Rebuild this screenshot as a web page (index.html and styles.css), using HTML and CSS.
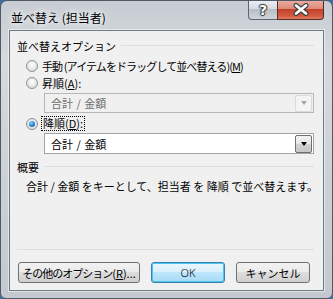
FILE: index.html
```html
<!DOCTYPE html>
<html>
<head>
    <title>並べ替え (担当者)</title>
    <meta charset="utf-8">
    <link rel="stylesheet" href="styles.css">
</head>
<body>
    <div class="window">
        <div class="titlebar">
            <span class="title">並べ替え (担当者)</span>
            <div class="caption">
                <div class="cap-btn help">?</div>
                <div class="cap-btn close">
                    <svg width="18" height="13" viewBox="0 0 18 13">
                        <path d="M4 2.5 L14 10.5 M14 2.5 L4 10.5" stroke="#3a3f45" stroke-width="5" stroke-linecap="round"/>
                        <path d="M4 2.5 L14 10.5 M14 2.5 L4 10.5" stroke="#fff" stroke-width="2.8" stroke-linecap="round"/>
                    </svg>
                </div>
            </div>
        </div>
        <div class="client">
            <div class="group-head">
                <span>並べ替えオプション</span>
                <div class="rule"></div>
            </div>
            <div class="radio-row first">
                <span class="radio"></span>
                <span class="tight">手動 (アイテムをドラッグして並べ替える)(<u>M</u>)</span>
            </div>
            <div class="radio-row">
                <span class="radio"></span>
                <span>昇順(<u>A</u>):</span>
            </div>
            <div class="combo disabled">
                <span class="combo-text">合計 / 金額</span>
                <span class="drop"><i></i></span>
            </div>
            <div class="radio-row">
                <span class="radio checked"></span>
                <span class="focus">降順(<u>D</u>):</span>
            </div>
            <div class="combo active">
                <span class="combo-text">合計 / 金額</span>
                <span class="drop"><i></i></span>
            </div>
            <div class="group-head summary">
                <span>概要</span>
                <div class="rule"></div>
            </div>
            <div class="desc">合計 / 金額 をキーとして、担当者 を 降順 で並べ替えます。</div>
            <div class="separator"></div>
            <div class="buttons">
                <div class="btn wide"><span class="kana">その他のオプション</span><span>(<u>R</u>)...</span></div>
                <div class="btn default"><span class="latin">OK</span></div>
                <div class="btn"><span>キャンセル</span></div>
            </div>
        </div>
    </div>
</body>
</html>
```
FILE: styles.css
```css
* { margin: 0; padding: 0; box-sizing: border-box; }
body { background: #3d6ea3; font-family: "Noto Sans CJK JP", "Noto Sans", sans-serif; font-size: 11px; color: #000; }

.window { width: 333px; height: 299px; border: 1px solid #4f5a66; border-radius: 7px 7px 6px 6px; background: linear-gradient(#c6ccd2, #d6dadd 20%, #ccd1d5 60%, #c3c9ce); overflow: hidden; }
.titlebar { height: 29px; display: flex; justify-content: space-between; padding: 0 8px 0 10px; }
.title { font-size: 12px; line-height: 29px; padding-top: 2px; text-shadow: 0 0 6px #fff, 0 0 10px #fff; }
.caption { display: flex; height: 20px; margin-top: -1px; }
.cap-btn { height: 20px; border: 1px solid #5c6670; border-top: none; display: flex; align-items: center; justify-content: center; }
.help { width: 29px; border-radius: 0 0 0 4px; border-right: none; background: linear-gradient(#eef1f3, #d6dbe0 45%, #b7bec5 50%, #cfd5da); color: #fff; font: bold 14px "DejaVu Sans", sans-serif; text-shadow: 0 0 1px #333, 1px 0 1px #333, -1px 0 1px #333, 0 1px 1px #333, 0 -1px 1px #333; }
.close { width: 47px; border-radius: 0 0 4px 0; border-color: #5a2a24; background: linear-gradient(#eab0a4, #de8a78 45%, #c5412b 50%, #d0563c 80%, #e07a5e); }

.client { height: 261px; margin: 0 8px; border: 1px solid #6e7986; background: #f0f0f0; box-shadow: 0 0 0 1px rgba(255,255,255,0.5); }

.group-head { display: flex; align-items: center; height: 13px; margin-top: 8px; padding: 0 9px 0 7px; }
.group-head .rule { flex: 1; height: 1px; background: #d5dfe5; margin-left: 5px; }
.group-head.summary { margin-top: 6px; }

.radio-row { display: flex; align-items: center; height: 17px; padding-left: 16px; }
.radio-row.first { margin-top: 5px; }
.radio-row + .combo { margin-top: 2px; }
.combo + .radio-row { margin-top: 2px; }
.tight { letter-spacing: -0.9px; white-space: nowrap; }
.radio { width: 12px; height: 12px; border-radius: 50%; border: 1px solid #8f9295; background: radial-gradient(circle at 50% 40%, #fff, #e6e6e6 55%, #cdcdcd); margin-right: 4px; display: flex; align-items: center; justify-content: center; }
.radio.checked::after { content: ""; width: 6px; height: 6px; border-radius: 50%; background: radial-gradient(circle at 40% 35%, #8fd4ff, #1e7fd0 55%, #0b4d8f); }
.focus { outline: 1px dotted #000; outline-offset: 0; padding: 0 1px; line-height: 13px; }

.combo { display: flex; align-items: center; justify-content: space-between; margin: 0 9px 0 34px; height: 20px; border: 1px solid #abadb3; padding: 0 1px 0 6px; }
.combo-text { word-spacing: 1px; }
.combo.disabled { background: #f0f0f0; color: #6d6d6d; border-color: #b4b8bc; }
.combo.active { height: 21px; margin-top: 1px; background: #fff; border-color: #9ea4ab; }
.drop { width: 17px; height: 17px; display: flex; align-items: center; justify-content: center; border-radius: 2px; }
.drop i { width: 0; height: 0; border-left: 3.5px solid transparent; border-right: 3.5px solid transparent; border-top: 4px solid #000; }
.disabled .drop { border: 1px solid #dadada; background: #f4f4f4; }
.disabled .drop i { border-top-color: #a7a7a7; }
.active .drop { height: 18px; border: 1px solid #707070; background: linear-gradient(#f3f3f3, #e6e6e6 50%, #d2d2d2 52%, #c6c6c6); }

.desc { height: 16px; line-height: 16px; margin-top: 5px; padding-left: 16px; white-space: nowrap; }
.separator { height: 1px; background: #d5dfe5; margin: 55px 9px 0 7px; }

.buttons { display: flex; gap: 11px; margin-top: 12px; padding-left: 8px; }
.btn { height: 21px; width: 74px; display: flex; align-items: center; justify-content: center; border: 1px solid #707070; border-radius: 3px; background: linear-gradient(#f2f2f2, #ebebeb 48%, #dddddd 50%, #cfcfcf); white-space: nowrap; cursor: default; }
.btn.wide { width: 122px; }
.btn .kana { letter-spacing: -1px; }
.btn .latin { font-family: "Noto Sans", sans-serif; font-weight: 300; }
.btn.default { border-color: #3c7fb1; box-shadow: inset 0 0 0 1px #48c8f0; background: linear-gradient(#eaf6fd, #d9f0fc 48%, #bee6fd 50%, #a7d9f5); }
```
